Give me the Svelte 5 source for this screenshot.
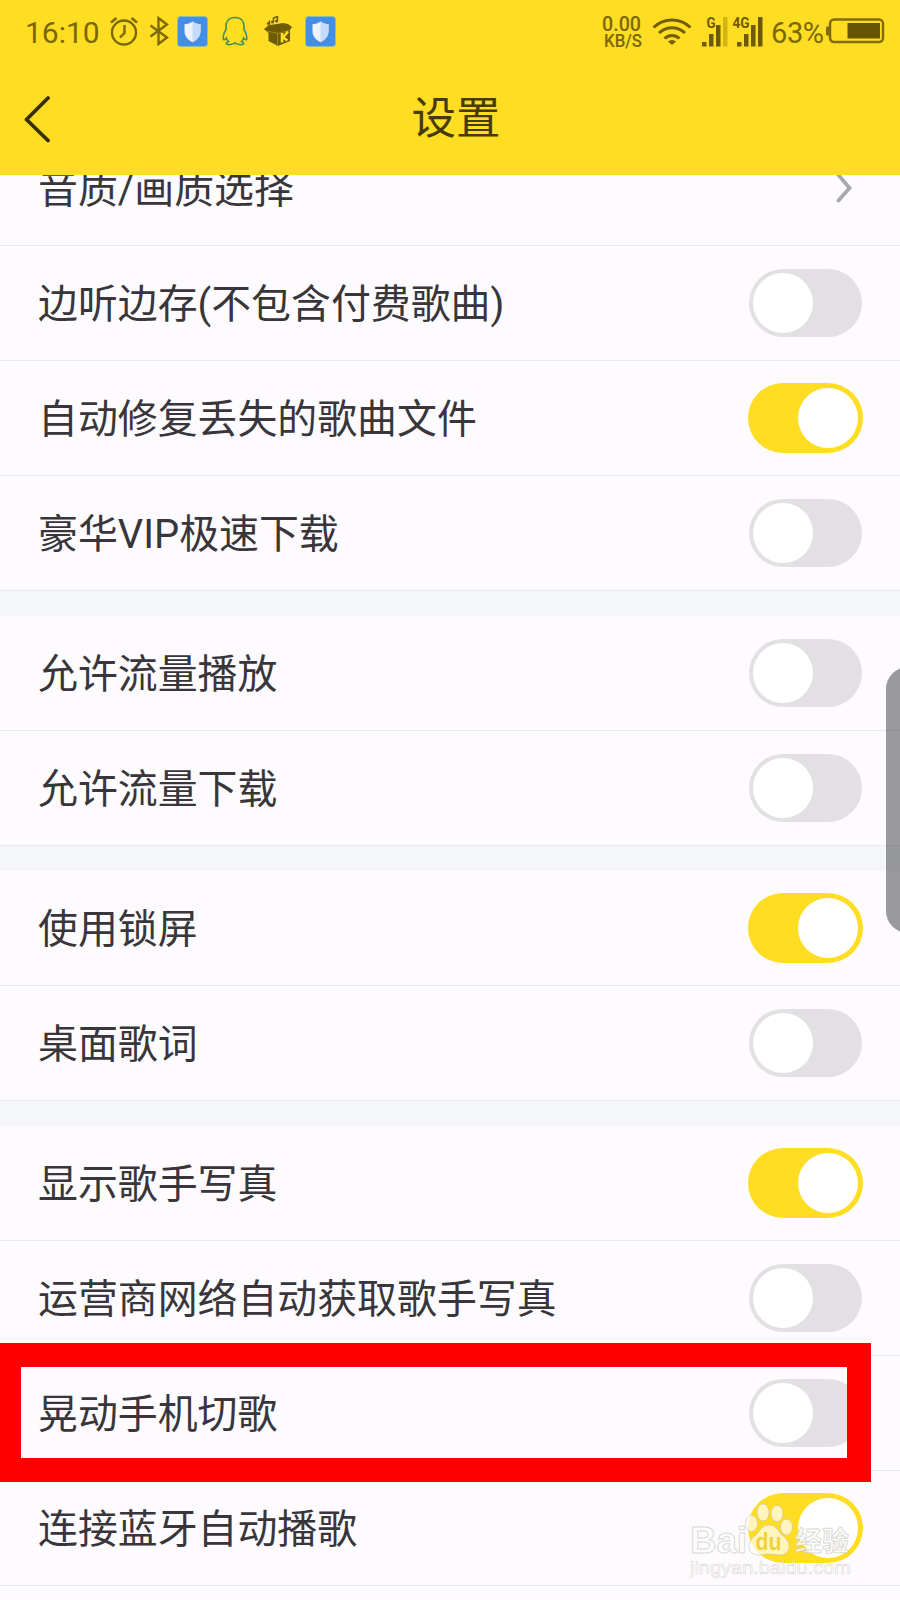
<script>
  const groups = [
    [
      { label: "音质/画质选择", link: true },
      { label: "边听边存(不包含付费歌曲)", on: false },
      { label: "自动修复丢失的歌曲文件", on: true },
      { label: "豪华VIP极速下载", on: false },
    ],
    [
      { label: "允许流量播放", on: false },
      { label: "允许流量下载", on: false },
    ],
    [
      { label: "使用锁屏", on: true },
      { label: "桌面歌词", on: false },
    ],
    [
      { label: "显示歌手写真", on: true },
      { label: "运营商网络自动获取歌手写真", on: false },
      { label: "晃动手机切歌", on: false, marked: true },
      { label: "连接蓝牙自动播歌", on: true },
    ],
  ];
</script>

{#snippet shield()}
  <svg class="shield" width="31" height="31" viewBox="0 0 31 31">
    <rect x="0.5" y="0.5" width="30" height="30" rx="3" fill="#448ee6" stroke="#8fbfa8" />
    <path d="M15.500 5.500c2.500 1.800 5 2.500 8 2.700v7c0 5-3.500 8.800-8 11-4.500-2.200-8-6-8-11v-7c3-.2 5.500-.9 8-2.700z" fill="#eef3fe" />
    <path d="M15.500 5.500c2.500 1.800 5 2.500 8 2.700v7c0 5-3.500 8.800-8 11z" fill="#c6dafa" />
  </svg>
{/snippet}

<div class="screen">
  <header>
    <div class="status">
      <span class="time">16:10</span>
      <svg class="alarm" width="28" height="30" viewBox="0 0 28 30" fill="none" stroke="#7a6705" stroke-width="2.400">
        <circle cx="14" cy="16.500" r="12" />
        <path d="M14.500 9v8l-4.500 4.500M1 6.500l5.500-4.500M21.500 2l5.500 4.500" />
      </svg>
      <svg class="bluetooth" width="20" height="30" viewBox="0 0 20 30" fill="none" stroke="#7a6705" stroke-width="2.300">
        <path d="M1.500 9.500L18 21.500 9.500 28V2L18 8.500 1.500 20.500" />
      </svg>
      {@render shield()}
      <svg class="penguin" width="26" height="30" viewBox="0 0 26 30" fill="none" stroke="#3f8f5a" stroke-width="1.600">
        <path d="M13 1.500c-6 0-9 4-9 9v3C2 16.500.8 20 1.300 23c.5 1.500 1.700.5 3-1 .4 1.700 1.200 2.700 2.200 3.500-2 .7-2.500 1.500-2 2.500 2 1 6.500.8 8.500-1.200 2 2 6.500 2.200 8.500 1.200.5-1 0-1.800-2-2.500 1-.8 1.800-1.800 2.200-3.500 1.300 1.500 2.500 2.500 3 1 .5-3-.7-6.500-2.700-9.500v-3c0-5-3-9-9-9z" />
      </svg>
      <svg class="music-box" width="28" height="30" viewBox="0 0 28 30">
        <path d="M0 13l5-4 8-1 6-1 5 1 4 3-2 3v11l-12 5-9.500-5V17z" fill="#6d5b05" />
        <path d="M3 15l11 2.500 11-3M13.500 18v11" stroke="#a08a10" fill="none" />
        <path d="M18 17v9.500M24 15.500l-5 6 4.500 3" stroke="#ffdf22" stroke-width="2.600" fill="none" />
        <path d="M5.500 8V4.500M9.500 6V2l4-1.500v5" stroke="#6d5b05" stroke-width="1.400" fill="none" />
        <circle cx="4.500" cy="7.500" r="1.600" fill="#6d5b05" />
        <circle cx="8.500" cy="6" r="1.500" fill="#6d5b05" />
        <circle cx="12.500" cy="5" r="1.500" fill="#6d5b05" />
      </svg>
      {@render shield()}

      <svg class="speed" width="44" height="44" viewBox="0 0 44 44" fill="#7a6705">
        <text x="2" y="22" font-size="19.500" textLength="39" lengthAdjust="spacingAndGlyphs">0.00</text>
        <text x="4" y="38" font-size="18" textLength="38" lengthAdjust="spacingAndGlyphs">KB/S</text>
      </svg>
      <svg class="wifi" width="40" height="28" viewBox="0 0 40 28" fill="none" stroke="#705e05" stroke-width="3">
        <path d="M1.500 10.500c10.500-10 26.500-10 37 0M7 16c7.500-7 18.500-7 26 0M12.500 21.500c4.500-4 10.500-4 15 0" />
        <path d="M16 24.500q4-3 8 0l-4 3.500z" fill="#705e05" stroke="none" />
      </svg>
      <svg class="signal" width="63" height="31" viewBox="0 0 63 31" fill="#6d5a05">
        <path d="M1 26h4.500v4.500H1zM8 18h4.500v12.500H8zM15 9h4.500v21.500H15z" />
        <path d="M22 1h4.500v29.500H22z" fill="#d3b512" />
        <path d="M36 26h4.500v4.500H36zM43 18h4.500v12.500H43zM50 9h4.500v21.500H50zM57 1h4.500v29.500H57z" />
        <text x="5.500" y="12" textLength="9" lengthAdjust="spacingAndGlyphs">G</text>
        <text x="31.500" y="12" textLength="17" lengthAdjust="spacingAndGlyphs">4G</text>
      </svg>
      <span class="percent">63%</span>
      <svg class="battery" width="59" height="26" viewBox="0 0 59 26">
        <rect x="4" y="1.500" width="53" height="22.500" rx="4" fill="none" stroke="#806c08" stroke-width="2.500" />
        <rect x="0" y="8.500" width="4" height="9" rx="1" fill="#806c08" />
        <rect x="21.500" y="5" width="32.500" height="15.500" fill="#665505" />
      </svg>
    </div>
    <div class="titlebar">
      <svg class="back" width="27" height="48" viewBox="0 0 27 48" fill="none" stroke="#382f06" stroke-width="3.800" stroke-linecap="round" stroke-linejoin="round">
        <path d="M25 3L3.500 24.500 25 45.500" />
      </svg>
      <h1>设置</h1>
    </div>
  </header>

  <main>
    {#each groups as group}
      <section>
        {#each group as item}
          <div class="row">
            <span>{item.label}</span>
            {#if item.link}
              <svg class="arrow" width="16" height="30" viewBox="0 0 16 30" fill="none" stroke="#a9a8ab" stroke-width="3.800" stroke-linecap="round">
                <path d="M2.500 2l11 13-11 12.500" />
              </svg>
            {:else}
              <div class="toggle" class:on={item.on}><i></i></div>
            {/if}
            {#if item.marked}
              <div class="mark"></div>
            {/if}
          </div>
        {/each}
      </section>
    {/each}
  </main>

  <div class="side-handle"></div>

  <svg class="watermark" width="172" height="84" viewBox="0 0 172 84">
    <g fill="#fff" fill-opacity="0.700" stroke="#c4c0b8" stroke-opacity="0.600" stroke-width="1">
      <text class="brand" x="1" y="53" textLength="57" lengthAdjust="spacingAndGlyphs">Bai</text>
      <ellipse cx="62.500" cy="23.500" rx="6" ry="8" />
      <ellipse cx="74" cy="12.500" rx="6" ry="8.500" />
      <ellipse cx="88" cy="13.500" rx="6" ry="8" />
      <ellipse cx="97.500" cy="27" rx="6" ry="8" />
      <path d="M80 25c7 0 9 6 13 10 5 4 7 7 7 11 0 7-5 9-10 9-4 0-6-1-10-1s-6 1-10 1c-5 0-10-2-10-9 0-4 2-7 7-11 4-4 6-10 13-10z" />
      <text class="cn" x="106" y="51" textLength="54">经验</text>
      <text class="url" x="1" y="74" textLength="161" lengthAdjust="spacingAndGlyphs" stroke-width="0.600">jingyan.baidu.com</text>
    </g>
    <text class="du" x="66.500" y="50" textLength="26" lengthAdjust="spacingAndGlyphs">du</text>
  </svg>
</div>

<style>
  :global(body) {
    margin: 0;
    background: #fdfbfe;
  }

  .screen {
    position: relative;
    height: 1600px;
    overflow: hidden;
    background: #fdfbfe;
    font-family: Roboto, "Noto Sans CJK SC", sans-serif;
    color: #38363a;
  }

  header {
    position: relative;
    z-index: 1;
    height: 175px;
    background: #ffdd22;
  }

  .status {
    display: flex;
    align-items: center;
    height: 62px;
    padding: 0 15px 0 25px;
    color: #7a6705;
  }

  .status svg {
    flex: none;
  }

  .time {
    width: 74px;
    font-size: 30px;
    padding-top: 3px;
  }

  .alarm {
    margin-left: 11px;
  }

  .bluetooth {
    margin-left: 11px;
  }

  .shield {
    margin-left: 8px;
  }

  .penguin {
    margin-left: 14px;
  }

  .music-box {
    margin-left: 16px;
  }

  .music-box + .shield {
    margin-left: 13px;
  }

  .speed {
    margin-left: auto;
    font-weight: 500;
  }

  .wifi {
    margin-left: 8px;
  }

  .signal {
    margin-left: 9px;
  }

  .signal text {
    font-size: 14px;
    font-weight: 700;
  }

  .percent {
    margin-left: 7px;
    width: 55px;
    font-size: 29px;
    letter-spacing: -0.4px;
    padding-top: 3px;
  }

  .titlebar {
    display: grid;
    grid-template-columns: 100px 1fr 88px;
    align-items: center;
    height: 113px;
  }

  .back {
    margin-left: 23px;
  }

  h1 {
    margin: 0;
    text-align: center;
    font-size: 44.5px;
    font-weight: 400;
    line-height: 60px;
    color: #463b06;
  }

  main {
    margin-top: -44px;
  }

  section + section {
    border-top: 25px solid #f4f6f8;
  }

  .row {
    position: relative;
    display: flex;
    align-items: center;
    justify-content: space-between;
    box-sizing: border-box;
    height: 115px;
    padding: 0 38px;
    border-bottom: 1px solid #e9e9ec;
    font-size: 39.9px;
    line-height: 60px;
  }

  .row span {
    padding-top: 4px;
  }

  .arrow {
    margin-right: 10px;
  }

  .toggle {
    box-sizing: border-box;
    display: flex;
    align-items: center;
    width: 113.5px;
    height: 68px;
    padding: 0 4px;
    border-radius: 34px;
    background: #e2e0e3;
  }

  .toggle i {
    width: 60px;
    height: 60px;
    border-radius: 50%;
    background: #fff;
  }

  .toggle.on {
    justify-content: flex-end;
    width: 115.5px;
    height: 70px;
    padding: 0 5.5px;
    margin-right: -1px;
    border-radius: 35px;
    background: #ffdd22;
  }

  .mark {
    position: absolute;
    z-index: 1;
    left: 0;
    top: -13px;
    box-sizing: border-box;
    width: 871px;
    height: 139px;
    border: 24px solid #ff0000;
    border-left-width: 21px;
  }

  .side-handle {
    position: absolute;
    top: 667px;
    right: -30px;
    width: 44px;
    height: 266px;
    border-radius: 22px;
    background: rgba(70, 70, 72, 0.54);
  }

  .watermark {
    position: absolute;
    left: 689px;
    top: 1500px;
  }

  .brand {
    font: 700 36px "Liberation Sans", sans-serif;
  }

  .cn {
    font: 700 27px "Noto Sans CJK SC", sans-serif;
  }

  .url {
    font: 400 19px "Liberation Sans", sans-serif;
  }

  .du {
    font: 700 24px "Liberation Sans", sans-serif;
    fill: #efd23a;
  }
</style>
